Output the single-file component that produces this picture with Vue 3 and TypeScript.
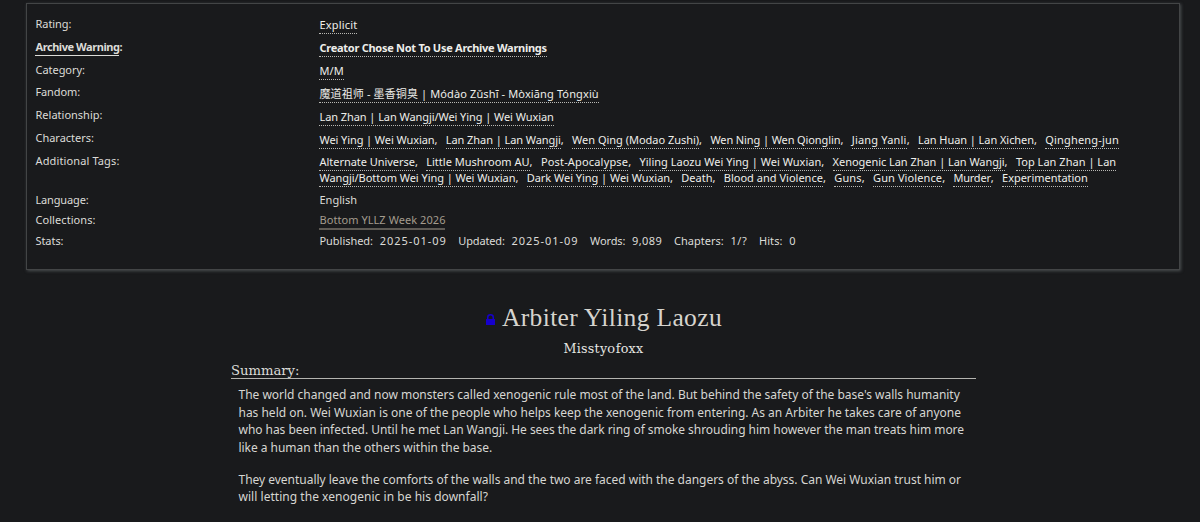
<script setup lang="ts">
interface Run {
  text: string
  width: number
}
interface Row {
  label: Run
  top: number
  kind: 'tags' | 'plain' | 'collection' | 'stats'
  strong?: boolean
  lines: Run[][]
}

const run = (text: string, width: number): Run => ({ text, width })

const rows: Row[] = [
  { label: run('Rating:', 36), top: 0, kind: 'tags', lines: [[run('Explicit', 38)]] },
  {
    label: run('Archive Warning', 84), top: 22.9, kind: 'tags', strong: true,
    lines: [[run('Creator Chose Not To Use Archive Warnings', 227.3)]],
  },
  { label: run('Category:', 49.5), top: 22.9, kind: 'tags', lines: [[run('M/M', 24.5)]] },
  {
    label: run('Fandom:', 44.5), top: 22.9, kind: 'tags',
    lines: [[run('魔道祖师 - 墨香铜臭 | Módào Zǔshī - Mòxiāng Tóngxiù', 279.3)]],
  },
  {
    label: run('Relationship:', 67), top: 22.9, kind: 'tags',
    lines: [[run('Lan Zhan | Lan Wangji/Wei Ying | Wei Wuxian', 234.3)]],
  },
  {
    label: run('Characters:', 58.5), top: 22.9, kind: 'tags',
    lines: [[
      run('Wei Ying | Wei Wuxian', 115), run('Lan Zhan | Lan Wangji', 115), run('Wen Qing (Modao Zushi)', 127),
      run('Wen Ning | Wen Qionglin', 130), run('Jiang Yanli', 55), run('Lan Huan | Lan Xichen', 116), run('Qingheng-jun', 73.7),
    ]],
  },
  {
    label: run('Additional Tags:', 84), top: 22.9, kind: 'tags',
    lines: [
      [
        run('Alternate Universe', 95.4), run('Little Mushroom AU', 103.4), run('Post-Apocalypse', 87.3),
        run('Yiling Laozu Wei Ying | Wei Wuxian', 181.8), run('Xenogenic Lan Zhan | Lan Wangji', 172), run('Top Lan Zhan | Lan', 100.3),
      ],
      [
        run('Wangji/Bottom Wei Ying | Wei Wuxian', 195.9), run('Dark Wei Ying | Wei Wuxian', 143.4), run('Death', 31.1),
        run('Blood and Violence', 99.2), run('Guns', 27.5), run('Gun Violence', 69.1), run('Murder', 37.3), run('Experimentation', 85.7),
      ],
    ],
  },
  { label: run('Language:', 53), top: 38.4, kind: 'plain', lines: [[run('English', 37.5)]] },
  { label: run('Collections:', 60), top: 20.6, kind: 'collection', lines: [[run('Bottom YLLZ Week 2026', 126)]] },
  {
    label: run('Stats:', 28), top: 20.6, kind: 'stats',
    lines: [
      [run('Published:', 53.5), run('2025-01-09', 67)],
      [run('Updated:', 46.5), run('2025-01-09', 67)],
      [run('Words:', 35.2), run('9,089', 30.4)],
      [run('Chapters:', 49.8), run('1/?', 17)],
      [run('Hits:', 23.5), run('0', 7)],
    ],
  },
]

const paragraphs: Run[][] = [
  [
    run('The world changed and now monsters called xenogenic rule most of the land. But behind the safety of the base\'s walls humanity', 721.3),
    run('has held on. Wei Wuxian is one of the people who helps keep the xenogenic from entering. As an Arbiter he takes care of anyone', 722.5),
    run('who has been infected. Until he met Lan Wangji. He sees the dark ring of smoke shrouding him however the man treats him more', 725.5),
    run('like a human than the others within the base.', 253.7),
  ],
  [
    run('They eventually leave the comforts of the walls and the two are faced with the dangers of the abyss. Can Wei Wuxian trust him or', 722.5),
    run('will letting the xenogenic in be his downfall?', 249.5),
  ],
]

// Tracks a run of text so that it fills its measure.
const vFit = {
  mounted(el: HTMLElement, binding: { value: number }) {
    const natural = el.getBoundingClientRect().width
    const count = Array.from(el.textContent ?? '').length
    el.style.letterSpacing = `${(binding.value - natural) / count}px`
  },
}
</script>

<template>
  <main class="page">
    <dl class="meta">
      <div v-for="(row, i) in rows" :key="row.label.text" class="row" :style="{ height: (rows[i + 1]?.top ?? 20) + 'px' }">
        <dt :class="{ warning: row.strong }">
          <span v-fit="row.label.width" class="fit label">{{ row.label.text }}</span><span v-if="row.strong">:</span>
        </dt>
        <dd :class="[row.kind, { strong: row.strong }]">
          <div v-for="(line, l) in row.lines" :key="l" class="line">
            <template v-for="(item, k) in line" :key="k">
              <a v-if="row.kind === 'tags'" v-fit="item.width" class="fit tag">{{ item.text }}</a>
              <span v-else v-fit="item.width" class="fit value">{{ item.text }}</span>
              <span v-if="row.kind === 'tags' && k < line.length - 1" class="comma">,</span>
            </template>
          </div>
        </dd>
      </div>
    </dl>

    <header class="heading">
      <h2>
        <svg class="lock" viewBox="0 0 9 11" aria-hidden="true">
          <path d="M1.75 6V3.25Q1.75 .75 4.5 .75T7.25 3.25V6" fill="none" stroke="#1600cc" stroke-width="1.5" />
          <rect x="0" y="5" width="9" height="6" rx=".5" fill="#1600cc" />
        </svg>
        <span v-fit="220" class="fit">Arbiter Yiling Laozu</span>
      </h2>
      <h3><span v-fit="80" class="fit">Missty<span class="zero">0</span>foxx</span></h3>
    </header>

    <section class="summary">
      <h4><span v-fit="68.3" class="fit">Summary:</span></h4>
      <blockquote>
        <p v-for="(p, i) in paragraphs" :key="i">
          <span v-for="line in p" :key="line.text" class="prose-line"><span v-fit="line.width" class="fit">{{ line.text }}</span></span>
        </p>
      </blockquote>
    </section>
  </main>
</template>

<style>
html, body { margin: 0; background: #191a1c; }
</style>

<style scoped>
.page {
  box-sizing: border-box;
  height: 522px;
  overflow: hidden;
  padding-top: 3px;
  background: #191a1c;
  color: #dcdcd8;
  font-family: "Noto Sans", "Noto Sans CJK SC", sans-serif;
  font-size: 11px;
}
.fit { display: inline-block; white-space: nowrap; }
.meta {
  box-sizing: border-box;
  width: 1154px;
  height: 267px;
  margin: 0 0 0 26.4px;
  padding: 11.8px 0 0 8.1px;
  border: 1px solid #434546;
  box-shadow: 1px 1px 3px #4a4f50;
}
.row { display: flex; line-height: 16px; }
dt { width: 284px; flex: none; }
dd { margin: 0; }
.line { display: flex; height: 16px; }
dd.tags { padding-top: 1.3px; color: #eeeeea; }
.tag { height: 16px; border-bottom: 1px dotted #b8b8b4; box-sizing: content-box; }
.comma { width: 11.3px; }
.warning, .strong { font-weight: 700; }
.warning .label { height: 16px; border-bottom: 1px solid #dcdcd8; }
.collection { color: #a49c8e; }
.collection .value { height: 16px; border-bottom: 2px solid #5f5b55; }
dd.stats { display: flex; gap: 11.6px; }
.stats .line { gap: 6.7px; }

.heading { text-align: center; font-family: "Liberation Serif", serif; }
h2 {
  display: flex;
  justify-content: center;
  margin: 33px 0 0;
  padding-left: 8px;
  font-size: 25.5px;
  font-weight: 400;
  line-height: 30px;
  color: #d6d4ce;
}
.lock { flex: none; width: 9px; height: 11px; margin: 11px 7px 0 0; }
h3 { margin: 7px 0 0; padding-left: 7px; font: 400 12.7px/18px "DejaVu Serif", serif; color: #e6e6e2; }
.zero { display: inline-block; font-size: 10px; line-height: 10px; width: 8.5px; transform: scaleX(1.3); }

.summary { width: 745px; margin: 4px 0 0 231px; }
h4 {
  height: 16px;
  margin: 0;
  border-bottom: 1px solid #b4b4b0;
  font: 400 13.2px/18px "DejaVu Serif", serif;
}
blockquote { margin: 7px 0 0 7.5px; font-size: 12px; line-height: 17.5px; color: #d6d6d2; }
p { margin: 0 0 14.5px; }
.prose-line { display: block; height: 17.5px; }
</style>
